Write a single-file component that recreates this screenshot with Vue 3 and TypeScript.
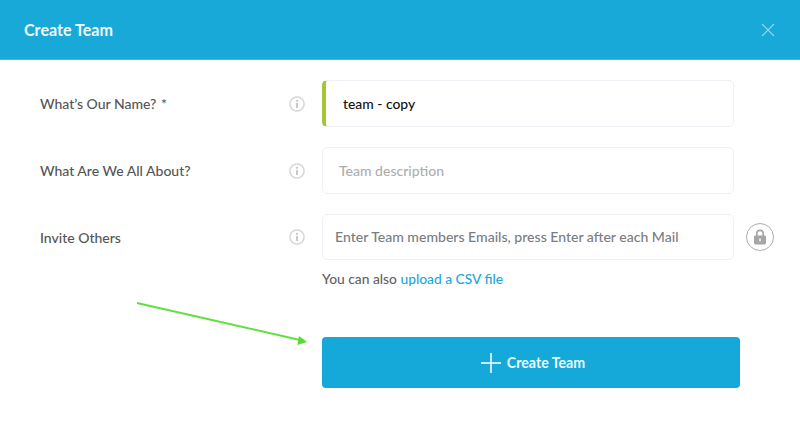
<script setup lang="ts">
interface Row {
  label: string
  required: boolean
  value: string
  kind: 'filled' | 'placeholder' | 'hint'
}
const rows: Row[] = [
  { label: 'What’s Our Name?', required: true, value: 'team - copy', kind: 'filled' },
  { label: 'What Are We All About?', required: false, value: 'Team description', kind: 'placeholder' },
  { label: 'Invite Others', required: false, value: 'Enter Team members Emails, press Enter after each Mail', kind: 'hint' },
]
</script>

<template>
  <div class="modal">
    <header class="head">
      <h1 class="title">Create Team</h1>
      <svg class="close" width="14" height="14" viewBox="0 0 14 14" aria-label="Close">
        <path d="M1 1 13 13M13 1 1 13" stroke="#8fd6ec" stroke-width="1.2" fill="none" />
      </svg>
    </header>
    <main class="body">
      <div v-for="row in rows" :key="row.label" class="row" :class="'row-' + row.kind">
        <span class="label">{{ row.label }}<span v-if="row.required" class="req"> *</span></span>
        <svg class="info" width="16" height="16" viewBox="0 0 16 16">
          <circle cx="8" cy="8" r="7.1" fill="none" stroke="#d6d6d6" stroke-width="1.5" />
          <rect x="7.1" y="7" width="1.8" height="5" fill="#c4c4c4" />
          <circle cx="8" cy="4.8" r="1.1" fill="#c4c4c4" />
        </svg>
        <div class="field" :class="'field-' + row.kind">{{ row.value }}</div>
        <div v-if="row.kind === 'hint'" class="lock">
          <svg width="14" height="16" viewBox="0 0 14 16">
            <path d="M3.8 7V4.6a3.2 3.2 0 0 1 6.4 0V7" fill="none" stroke="#a6a6a6" stroke-width="1.6" />
            <rect x="1" y="6.4" width="12" height="9" rx="1.4" fill="#a6a6a6" />
            <rect x="6" y="9.4" width="2" height="3" fill="#e4e4e4" />
          </svg>
        </div>
      </div>
      <p class="csv">You can also <a class="link">upload a CSV file</a></p>
      <button class="submit" type="button">
        <svg width="20" height="20" viewBox="0 0 20 20">
          <path d="M10 0V20M0 10H20" stroke="#fff" stroke-width="1.5" fill="none" />
        </svg>
        <span>Create Team</span>
      </button>
    </main>
    <svg class="arrow" width="800" height="430" viewBox="0 0 800 430">
      <path d="M137 303 300 340" stroke="#5fe03f" stroke-width="2" fill="none" />
      <path d="M307 342 299 336 297.3 345Z" fill="#54dc34" />
    </svg>
  </div>
</template>

<style>
html, body { margin: 0; background: #fff; }
</style>

<style scoped>
.modal {
  position: relative;
  width: 800px;
  height: 430px;
  overflow: hidden;
  background: #fff;
  font-family: Lato, "Liberation Sans", sans-serif;
  display: flex;
  flex-direction: column;
}
.head {
  height: 60px;
  flex: none;
  box-sizing: border-box;
  padding: 0 25px 0 24px;
  background: #18a9d8;
  display: flex;
  align-items: center;
  justify-content: space-between;
  border-bottom: 1px solid #3dbbe3;
}
.title {
  margin: 0;
  font-size: 16.1px;
  font-weight: 700;
  color: #eef9fd;
}
.body {
  flex: 1;
  padding: 20px 0 0 40px;
  display: flex;
  flex-direction: column;
}
.row {
  display: grid;
  grid-template-columns: 249px 33px 412px 40px;
  align-items: center;
  margin-bottom: 20px;
}
.row-hint { margin-bottom: 0; }
.label {
  font-size: 14px;
  font-weight: 500;
  color: #555;
}
.req { margin-left: 1px; }
.field {
  box-sizing: border-box;
  height: 47px;
  line-height: 45px;
  border: 1px solid #edf1f6;
  border-radius: 5px;
  padding-left: 16px;
  font-size: 14px;
  font-weight: 500;
  color: #aeaeae;
  background: #fff;
}
.field-filled {
  border-left: 4px solid #a3c736;
  padding-left: 17px;
  font-size: 13.9px;
  color: #111;
}
.field-hint {
  height: 46px;
  line-height: 44px;
  padding-left: 12px;
  font-size: 14.05px;
  color: #787d82;
}
.lock {
  box-sizing: border-box;
  width: 28px;
  height: 28px;
  margin-left: 12px;
  border: 1px solid #adadad;
  border-radius: 50%;
  display: flex;
  align-items: center;
  justify-content: center;
}
.csv {
  margin: 10px 0 0 282px;
  font-size: 13.8px;
  font-weight: 500;
  line-height: 18px;
  color: #5f6367;
}
.link { color: #1ba8d8; }
.submit {
  box-sizing: border-box;
  width: 418px;
  height: 51px;
  margin: 49px 0 0 282px;
  padding: 0 0 0 4px;
  border: 0;
  border-radius: 4px;
  background: #14a9d8;
  color: #eef9fd;
  font-family: inherit;
  font-size: 14.2px;
  font-weight: 700;
  display: flex;
  align-items: center;
  justify-content: center;
  gap: 6px;
}
.arrow {
  position: absolute;
  inset: 0;
  pointer-events: none;
}
</style>
